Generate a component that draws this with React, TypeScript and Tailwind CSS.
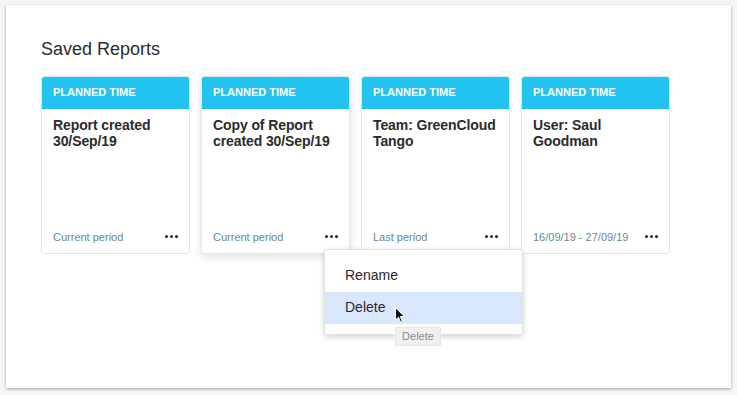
import { useState } from "react";

type Report = {
  title: string;
  period: string;
  raised?: boolean;
};

const reports: Report[] = [
  { title: "Report created 30/Sep/19", period: "Current period" },
  { title: "Copy of Report created 30/Sep/19", period: "Current period", raised: true },
  { title: "Team: GreenCloud Tango", period: "Last period" },
  { title: "User: Saul Goodman", period: "16/09/19 - 27/09/19" },
];

function Dots() {
  return (
    <span className="flex items-center gap-[2px]">
      <span className="h-[3px] w-[3px] rounded-full bg-[#222]" />
      <span className="h-[3px] w-[3px] rounded-full bg-[#222]" />
      <span className="h-[3px] w-[3px] rounded-full bg-[#222]" />
    </span>
  );
}

function ReportCard({ report }: { report: Report }) {
  return (
    <div
      className={
        report.raised
          ? "flex h-[178px] w-[149px] flex-col overflow-hidden rounded-[3px] border border-[#e3e8ec] bg-white shadow-[0_3px_8px_rgba(0,0,0,0.12)]"
          : "flex h-[178px] w-[149px] flex-col overflow-hidden rounded-[3px] border border-[#dfe5ea] bg-white"
      }
    >
      <div className="flex h-[32px] items-center bg-[#22c3f0] px-[11px] pb-[1px] text-[11px] font-bold text-white">
        PLANNED TIME
      </div>
      <div className="flex-1 pl-[11px] pr-[4px] pt-[8px] text-[14px] font-bold leading-[16px] tracking-[-0.1px] text-[#2b2b2b]">
        {report.title}
      </div>
      <div className="flex items-center justify-between pb-[8px] pl-[11px] pr-[11px] text-[11px] text-[#668a94]">
        <span>{report.period}</span>
        <Dots />
      </div>
    </div>
  );
}

function Cursor() {
  return (
    <svg width="11" height="17" viewBox="0 0 11 17" className="absolute left-[389px] top-[302px]">
      <path d="M0.5 0.5 L0.5 13 L3.5 10.3 L5.6 15.3 L7.4 14.5 L5.3 9.6 L9.3 9.6 Z" fill="#111" stroke="#fff" strokeWidth="1" strokeLinejoin="round" />
    </svg>
  );
}

export default function App() {
  const [hover] = useState(1);

  return (
    <div className="h-[395px] w-[737px] bg-[#f6f6f6] px-[6px] pt-[5px] font-['Liberation_Sans',Arial,sans-serif]">
      <div className="relative h-[383px] w-[725px] bg-white px-[35px] pt-[33px] shadow-[0_1px_3px_rgba(0,0,0,0.35)]">
        <h1 className="text-[18px] leading-[22px] text-[#2b2b2b]">Saved Reports</h1>
        <div className="mt-[16px] flex gap-[11px]">
          {reports.map((r) => (
            <ReportCard key={r.title} report={r} />
          ))}
        </div>

        <div className="absolute left-[318px] top-[244px] w-[199px] rounded-[3px] border border-[#e2e2e2] bg-white py-[10px] text-[14px] text-[#2b2b2b] shadow-[0_2px_6px_rgba(0,0,0,0.18)]">
          {["Rename", "Delete"].map((label, i) => (
            <div
              key={label}
              className={
                i === hover
                  ? "flex h-[32px] items-center bg-[#d8e7fb] pb-[2px] pl-[20px]"
                  : "flex h-[32px] items-center pb-[2px] pl-[20px]"
              }
            >
              {label}
            </div>
          ))}
        </div>

        <div className="absolute left-[389px] top-[322px] flex h-[19px] w-[46px] items-center justify-center border border-[#e6e6e6] bg-[#f0f0f0] text-[11px] text-[#8a8a8a]">
          Delete
        </div>
        <Cursor />
      </div>
    </div>
  );
}
